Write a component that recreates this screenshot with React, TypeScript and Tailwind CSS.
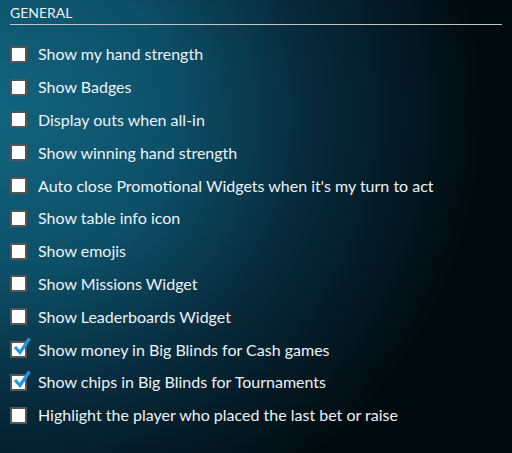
const OPTIONS: { label: string; checked: boolean }[] = [
  { label: 'Show my hand strength', checked: false },
  { label: 'Show Badges', checked: false },
  { label: 'Display outs when all-in', checked: false },
  { label: 'Show winning hand strength', checked: false },
  { label: "Auto close Promotional Widgets when it's my turn to act", checked: false },
  { label: 'Show table info icon', checked: false },
  { label: 'Show emojis', checked: false },
  { label: 'Show Missions Widget', checked: false },
  { label: 'Show Leaderboards Widget', checked: false },
  { label: 'Show money in Big Blinds for Cash games', checked: true },
  { label: 'Show chips in Big Blinds for Tournaments', checked: true },
  { label: 'Highlight the player who placed the last bet or raise', checked: false },
];

function CheckBox({ checked }: { checked: boolean }) {
  return (
    <span className="relative h-[17px] w-[17px] shrink-0 border-2 border-[#555] bg-white">
      {checked && (
        <svg viewBox="0 0 20 20" className="absolute -top-[6px] left-[0px] h-[20px] w-[20px]">
          <path d="M3 10 L8 15.5 L17.5 1.5" fill="none" stroke="#1b98e0" strokeWidth="3.2" strokeLinecap="butt" />
        </svg>
      )}
    </span>
  );
}

export default function App() {
  return (
    <div
      className="h-[453px] w-[512px] overflow-hidden bg-[radial-gradient(ellipse_95%_100%_at_0%_25%,#12647f_0%,#0d5068_35%,#07293a_65%,#010a0e_100%)] pl-[10px] pr-[10px] text-[#eef2f4]"
      style={{ fontFamily: 'Lato, "Open Sans", sans-serif' }}
    >
      <div className="border-b border-[#c4c4c4] pt-[5px] pb-[3px] text-[14px] leading-[16px]">GENERAL</div>
      <ul className="mt-[13px] flex flex-col">
        {OPTIONS.map(o => (
          <li key={o.label} className="flex h-[32.8px] items-center gap-[11px] text-[16px]">
            <CheckBox checked={o.checked} />
            <span>{o.label}</span>
          </li>
        ))}
      </ul>
    </div>
  );
}
